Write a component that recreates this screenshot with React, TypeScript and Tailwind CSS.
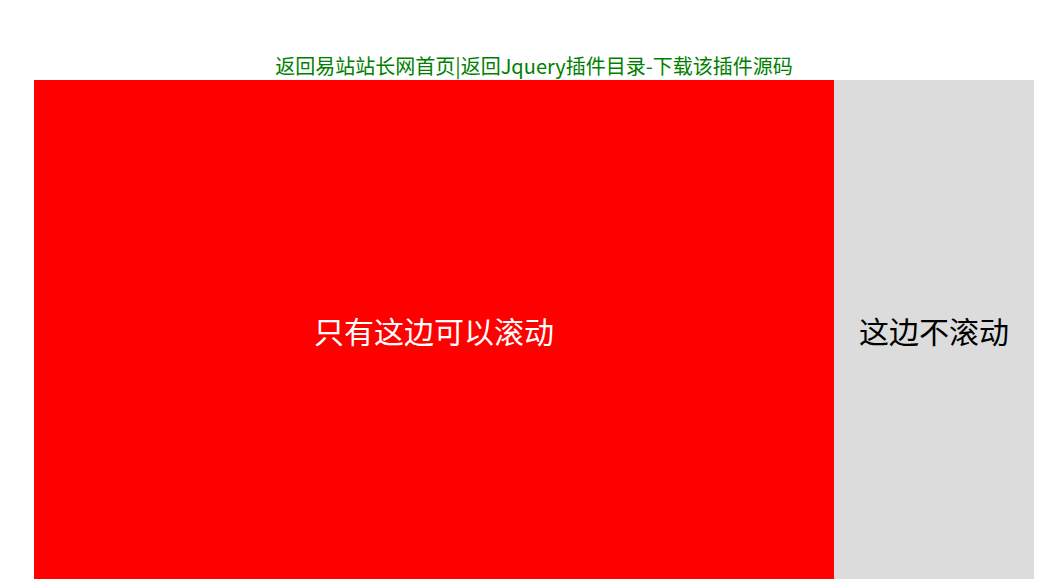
export default function App() {
  return (
    <div className="min-h-screen bg-white font-['Noto_Sans_CJK_SC','Noto_Sans',sans-serif]">
      <div className="ml-[34px] w-[1000px] pt-[50px]">
        {/* links */}
        <div className="h-[30px] text-center text-[20px] leading-[32px] text-[#008000]">
          <a href="#">返回易站站长网首页</a>|<a href="#">返回Jquery插件目录</a>-<a href="#">下载该插件源码</a>
        </div>

        <div className="flex h-[500px]">
          <div className="flex w-[800px] items-center justify-center bg-[#ff0000] text-[30px] text-white">
            只有这边可以滚动
          </div>
          <div className="flex w-[200px] items-center justify-center bg-[#dcdcdc] text-[30px] text-black">
            这边不滚动
          </div>
        </div>
      </div>
    </div>
  );
}
